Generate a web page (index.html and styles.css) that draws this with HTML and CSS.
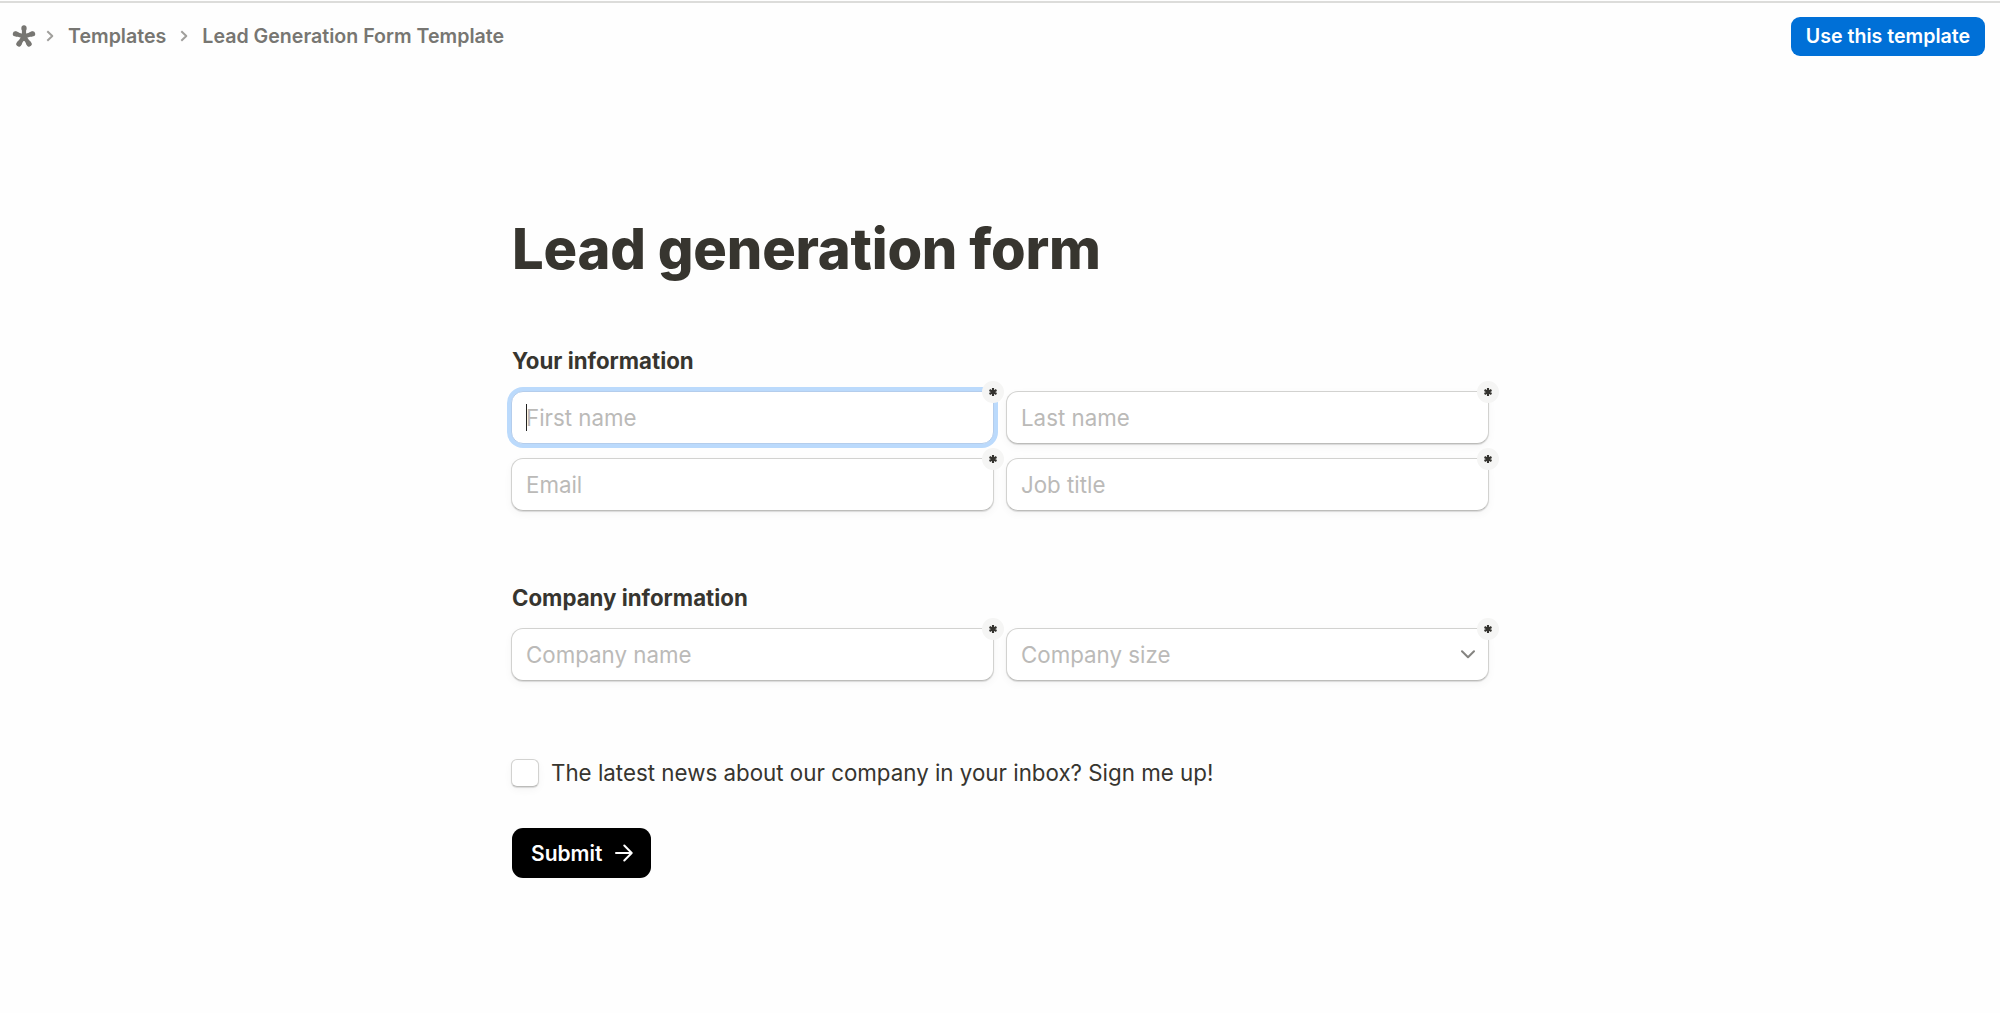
FILE: index.html
```html
<!DOCTYPE html>
<html lang="en">
<head>
    <meta charset="UTF-8">
    <meta name="viewport" content="width=device-width, initial-scale=1.0">
    <title>Lead Generation Form Template</title>
    <link rel="stylesheet" href="styles.css">
</head>
<body>
    <header>
        <nav class="breadcrumb">
            <svg class="logo" width="24" height="24" viewBox="0 0 24 24">
                <path d="M12 12.5V3.8M12 12.5L20.6 9.8M12 12.5L17.1 20M12 12.5L6.9 20M12 12.5L3.4 9.8"/>
                <path class="tips" d="M12 4.6V3.8M19.8 10L20.6 9.8M16.6 19.3L17.1 20M7.4 19.3L6.9 20M4.2 10L3.4 9.8"/>
            </svg>
            <svg class="sep sep-first" width="8" height="12" viewBox="0 0 8 12"><path d="M1.3 1.2L6.3 6L1.3 10.8"/></svg>
            <a class="crumb-templates">Templates</a>
            <svg class="sep" width="8" height="12" viewBox="0 0 8 12"><path d="M1.3 1.2L6.3 6L1.3 10.8"/></svg>
            <a class="crumb-current">Lead Generation Form Template</a>
        </nav>
        <button class="use-template" type="button">Use this template</button>
    </header>

    <form class="container">
        <h1>Lead generation form</h1>

        <h2>Your information</h2>
        <div class="fields">
            <div class="field focused">
                <input type="text" placeholder="First name">
                <span class="caret"></span>
                <span class="required"><svg width="10" height="10" viewBox="0 0 10 10"><path d="M5 1V9M1.5 3L8.5 7M8.5 3L1.5 7"/></svg></span>
            </div>
            <div class="field">
                <input type="text" placeholder="Last name">
                <span class="required"><svg width="10" height="10" viewBox="0 0 10 10"><path d="M5 1V9M1.5 3L8.5 7M8.5 3L1.5 7"/></svg></span>
            </div>
            <div class="field">
                <input type="text" placeholder="Email">
                <span class="required"><svg width="10" height="10" viewBox="0 0 10 10"><path d="M5 1V9M1.5 3L8.5 7M8.5 3L1.5 7"/></svg></span>
            </div>
            <div class="field">
                <input type="text" placeholder="Job title">
                <span class="required"><svg width="10" height="10" viewBox="0 0 10 10"><path d="M5 1V9M1.5 3L8.5 7M8.5 3L1.5 7"/></svg></span>
            </div>
        </div>

        <h2>Company information</h2>
        <div class="fields">
            <div class="field">
                <input type="text" placeholder="Company name">
                <span class="required"><svg width="10" height="10" viewBox="0 0 10 10"><path d="M5 1V9M1.5 3L8.5 7M8.5 3L1.5 7"/></svg></span>
            </div>
            <div class="field">
                <input type="text" placeholder="Company size">
                <svg class="chevron" width="14" height="9" viewBox="0 0 14 9"><path d="M1 1.2L7 7.2L13 1.2"/></svg>
                <span class="required"><svg width="10" height="10" viewBox="0 0 10 10"><path d="M5 1V9M1.5 3L8.5 7M8.5 3L1.5 7"/></svg></span>
            </div>
        </div>

        <label class="newsletter">
            <input type="checkbox">
            <span>The latest news about our company in your inbox? Sign me up!</span>
        </label>

        <button class="submit" type="button">
            Submit
            <svg width="18" height="18" viewBox="0 0 18 18"><path d="M1 9H16.5M9.3 1.5L16.7 9L9.3 16.5"/></svg>
        </button>
    </form>
</body>
</html>
```

FILE: styles.css
```css
* {
    box-sizing: border-box;
}

body {
    margin: 0;
    font-family: Inter, "Liberation Sans", sans-serif;
    color: #37352f;
    background-color: #fefefe;
}

input, button {
    font-family: inherit;
}

svg {
    fill: none;
    stroke-linecap: round;
    stroke-linejoin: round;
}

header {
    display: flex;
    justify-content: space-between;
    align-items: center;
    height: 57px;
    margin-top: 1px;
    padding: 12px 15px 0 12px;
    border-top: 2px solid #dcdcda;
}

.breadcrumb {
    display: flex;
    align-items: center;
    margin-top: -1px;
    font-size: 19.6px;
    font-weight: 600;
    color: #777672;
}

.logo {
    stroke: #777672;
    stroke-width: 4.2;
}

.logo .tips {
    stroke-width: 5.2;
}

.sep {
    stroke: #a09f9c;
    stroke-width: 2;
    stroke-linecap: butt;
    margin: 0 14px;
}

.sep-first {
    margin: 0 14px 0 10px;
}

.use-template {
    width: 194px;
    height: 39px;
    padding: 0 0 1px;
    border: none;
    border-radius: 9px;
    background-color: #0070d7;
    color: white;
    font-size: 19.6px;
    font-weight: 600;
}

.container {
    width: 978px;
    margin: 157px auto 0;
}

h1 {
    margin: 0 0 63px 1px;
    font-size: 56px;
    line-height: 68px;
    font-weight: 800;
    letter-spacing: -0.2px;
}

h2 {
    margin: 0 0 15px 1px;
    font-size: 22.25px;
    line-height: 30px;
    font-weight: 700;
}

.fields {
    display: grid;
    grid-template-columns: 1fr 1fr;
    gap: 14px 12px;
    margin-bottom: 72px;
}

.field {
    position: relative;
    height: 53px;
}

.field input {
    display: block;
    width: 100%;
    height: 53px;
    padding: 0 14px 1px;
    border: 1px solid #d2d2d0;
    border-bottom-color: #bcbcba;
    border-radius: 12px;
    background-color: white;
    box-shadow: 0 1px 1px rgba(0, 0, 0, 0.12), 0 3px 8px rgba(0, 0, 0, 0.04);
    font-size: 22.3px;
    color: #37352f;
    outline: none;
}

.field input::placeholder {
    color: #bbbab8;
    opacity: 1;
}

.focused input {
    border-color: #b4cdec;
    box-shadow: 0 0 0 4px #bbdafc;
}

.caret {
    position: absolute;
    left: 15px;
    top: 13px;
    width: 1px;
    height: 27px;
    background-color: #222;
}

.required {
    position: absolute;
    top: -10px;
    right: -10px;
    display: flex;
    align-items: center;
    justify-content: center;
    width: 22px;
    height: 22px;
    border-radius: 50%;
    background-color: #f5f5f4;
}

.required svg {
    stroke: #33322e;
    stroke-width: 2.1;
    stroke-linecap: butt;
}

.chevron {
    position: absolute;
    right: 14px;
    top: 22px;
    stroke: #858481;
    stroke-width: 2;
}

.newsletter {
    display: flex;
    align-items: center;
    gap: 12px;
    height: 28px;
    margin-top: 78px;
    font-size: 22.33px;
}

.newsletter span {
    padding-bottom: 2px;
}

.newsletter input {
    appearance: none;
    width: 28px;
    height: 28px;
    margin: 0;
    border: 1px solid #d2d2d0;
    border-bottom-color: #bcbcba;
    border-radius: 6px;
    background-color: white;
    box-shadow: 0 1px 1px rgba(0, 0, 0, 0.12), 0 3px 8px rgba(0, 0, 0, 0.04);
}

.submit {
    display: flex;
    align-items: center;
    gap: 13px;
    height: 50px;
    margin: 41px 0 0 1px;
    padding: 0 18px 0 19px;
    border: none;
    border-radius: 11px;
    background-color: black;
    color: white;
    font-size: 21px;
    font-weight: 600;
}

.submit svg {
    stroke: white;
    stroke-width: 2;
}
```
